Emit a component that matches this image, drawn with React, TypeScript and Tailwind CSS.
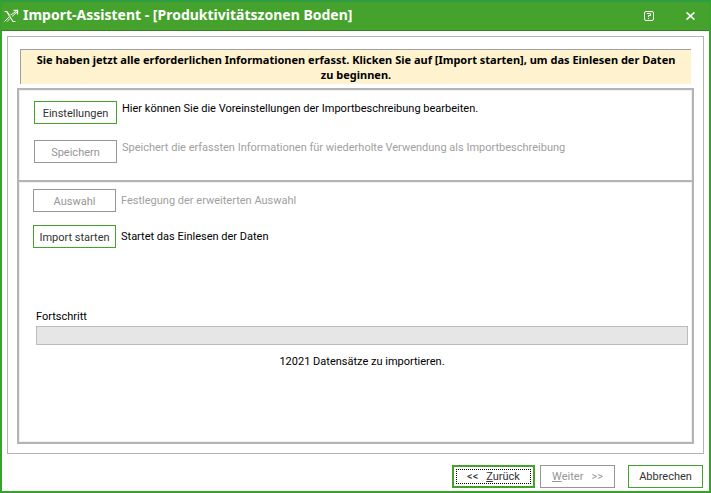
import type { ReactNode } from "react";

type ActionButtonProps = {
    label: string;
    disabled?: boolean;
};

function ActionButton({ label, disabled = false }: ActionButtonProps) {
    return (
        <button
            type="button"
            disabled={disabled}
            className="h-[23px] w-[83px] shrink-0 border border-[#45a22c] bg-white pt-px text-[#333] disabled:border-[#969696] disabled:text-[#969696]"
        >
            {label}
        </button>
    );
}

function Hint({ disabled = false, children }: { disabled?: boolean; children: ReactNode }) {
    return <p className={disabled ? "text-[#a0a0a0]" : "text-black"}>{children}</p>;
}

function LogoIcon() {
    return (
        <svg width="15" height="14" viewBox="0 0 15 14" fill="none" stroke="#f4faf2">
            <path d="M0.5 2.5H2.5L9 12.5H11.5M3 2.5L5.5 6" strokeWidth="1.1" />
            <path d="M0.5 12.5L5 8M3 12.5L6 9.5M6.5 6L12 2.5M8 7.5L13 3" strokeWidth="1" />
            <path d="M9.5 1.5H13.5V5.5" strokeWidth="1.3" />
        </svg>
    );
}

function HelpIcon() {
    return (
        <svg width="10" height="10" viewBox="0 0 10 10" fill="none" stroke="white">
            <rect x="0.5" y="0.5" width="9" height="9" rx="1.5" />
            <path d="M3 2.5H6.5V4.5H4.5V6M4.5 7V8" />
        </svg>
    );
}

function CloseIcon() {
    return (
        <svg width="9" height="8" viewBox="0 0 9 8" fill="none" stroke="white" strokeWidth="1.6">
            <path d="M0.5 0.4L8.5 7.6M8.5 0.4L0.5 7.6" />
        </svg>
    );
}

export default function App() {
    return (
        <div className="flex min-h-screen flex-col border-2 border-t-[#2d9c43] border-r-[#38a22c] border-b-[#38a22c] border-l-[#38a22c] bg-white font-['Roboto',sans-serif] text-[11px] leading-[15px] text-black">
            <header className="flex h-[29px] items-center border-b border-[#358420] bg-[#45a22c] pr-3.5 pl-0.5 font-['Noto_Sans',sans-serif] text-white">
                <LogoIcon />
                <h1 className="ml-1 flex-1 pb-0.5 text-[14px] leading-5 font-bold">Import-Assistent - [Produktivitätszonen Boden]</h1>
                <button type="button" aria-label="Hilfe" className="mr-8">
                    <HelpIcon />
                </button>
                <button type="button" aria-label="Schließen">
                    <CloseIcon />
                </button>
            </header>

            <main className="mx-[5px] mt-[5px] flex flex-1 flex-col border border-[#b4b4b4] px-[9px] pt-3 pb-[9px]">
                <p className="mx-[3px] border-t border-l border-[#a0a0a0] bg-[#fff2cf] px-3 pt-0.5 pb-0.5 text-center font-['Noto_Sans',sans-serif] font-bold">
                    Sie haben jetzt alle erforderlichen Informationen erfasst. Klicken Sie auf [Import starten], um das Einlesen der Daten zu beginnen.
                </p>

                <div className="mt-1 flex flex-1 flex-col border-2 border-[#b4b4b4]">
                    <section className="flex flex-col gap-4 border border-b-0 border-[#f0f0f0] px-3.5 pt-2.5 pb-[17px]">
                        <div className="flex items-start gap-[5px]">
                            <ActionButton label="Einstellungen" />
                            <Hint>Hier können Sie die Voreinstellungen der Importbeschreibung bearbeiten.</Hint>
                        </div>
                        <div className="flex items-start gap-[5px]">
                            <ActionButton label="Speichern" disabled />
                            <Hint disabled>Speichert die erfassten Informationen für wiederholte Verwendung als Importbeschreibung</Hint>
                        </div>
                    </section>

                    <section className="flex flex-1 border-t-2 border-[#b4b4b4]">
                        <div className="flex-1 border border-[#f0f0f0] pt-1.5 pr-[3px] pl-[13px]">
                            <div className="flex flex-col gap-[13px]">
                                <div className="flex items-center gap-[5px]">
                                    <ActionButton label="Auswahl" disabled />
                                    <Hint disabled>Festlegung der erweiterten Auswahl</Hint>
                                </div>
                                <div className="flex items-center gap-[5px]">
                                    <ActionButton label="Import starten" />
                                    <Hint>Startet das Einlesen der Daten</Hint>
                                </div>
                            </div>
                            <div className="mt-[61px] pl-[3px]">
                                <p id="progress-label">Fortschritt</p>
                                <div
                                    role="progressbar"
                                    aria-labelledby="progress-label"
                                    aria-valuenow={0}
                                    className="mt-0.5 h-[19px] border border-[#bcbcbc] bg-[#e6e6e6]"
                                />
                                <p className="mt-[9px] text-center">12021 Datensätze zu importieren.</p>
                            </div>
                        </div>
                    </section>
                </div>
            </main>

            <footer className="flex justify-end pt-[11px] pr-1.5 pb-[3px] text-[#333]">
                <button type="button" className="h-[23px] w-[83px] border-2 border-[#45a22c] p-0.5">
                    <span className="flex h-full items-center justify-center gap-2 border border-dotted border-black">
                        <span>&lt;&lt;</span>
                        <span><u>Z</u>urück</span>
                    </span>
                </button>
                <button type="button" disabled className="ml-[5px] flex h-[23px] w-[75px] items-center justify-center gap-2 border border-[#969696] text-[#969696]">
                    <span><u>W</u>eiter</span>
                    <span>&gt;&gt;</span>
                </button>
                <button type="button" className="ml-[13px] h-[23px] w-[75px] border border-[#45a22c]">
                    Abbrechen
                </button>
            </footer>
        </div>
    );
}
